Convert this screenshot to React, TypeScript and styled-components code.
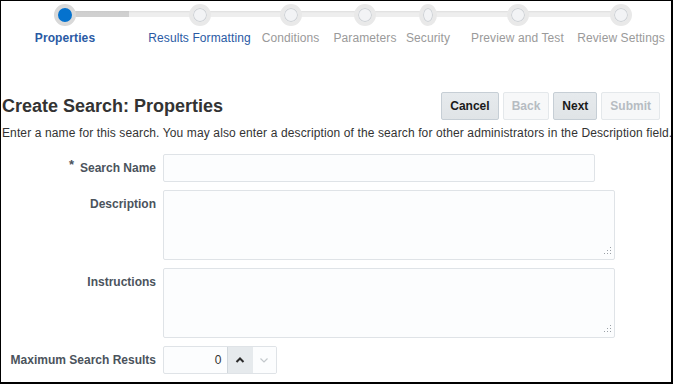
import React from 'react';
import styled, { createGlobalStyle } from 'styled-components';

const GlobalStyle = createGlobalStyle`
  html, body {
    margin: 0;
    padding: 0;
    background: #fff;
  }
  body {
    font-family: 'Liberation Sans', Arial, sans-serif;
    font-size: 12px;
    color: #333;
  }
`;

const steps = [
  { label: 'Properties', width: 128, state: 'current' },
  { label: 'Results Formatting', width: 141, state: 'next' },
  { label: 'Conditions', width: 41, state: 'off' },
  { label: 'Parameters', width: 108, state: 'off' },
  { label: 'Security', width: 18, state: 'off' },
  { label: 'Preview and Test', width: 161, state: 'off' },
  { label: 'Review Settings', width: 46, state: 'off' },
] as const;

type StepState = 'current' | 'next' | 'off';

const fields = [
  { label: 'Search Name', kind: 'input', required: true },
  { label: 'Description', kind: 'area', required: false },
  { label: 'Instructions', kind: 'area', required: false },
] as const;

const App = () => {
  return (
    <>
      <GlobalStyle />
      <Frame>
        <Train>
          {steps.map((step, i) => (
            <Step key={step.label} $w={step.width}>
              <Track $first={i === 0} $last={i === steps.length - 1}>
                <Dot $state={step.state} />
              </Track>
              <StepLabel $state={step.state}>{step.label}</StepLabel>
            </Step>
          ))}
        </Train>

        <Header>
          <Title>Create Search: Properties</Title>
          <Toolbar>
            <Button>Cancel</Button>
            <Button disabled>Back</Button>
            <Button>Next</Button>
            <Button disabled>Submit</Button>
          </Toolbar>
        </Header>

        <Intro>
          Enter a name for this search. You may also enter a description of the search for other
          administrators in the Description field.
        </Intro>

        <Form>
          {fields.map((f) => (
            <React.Fragment key={f.label}>
              <Label>
                {f.required && <Star>*</Star>}
                {f.label}
              </Label>
              {f.kind === 'input' ? (
                <TextInput type='text' />
              ) : (
                <AreaWrap>
                  <TextArea />
                  <Grip width='8' height='9' viewBox='0 0 8 9'>
                    <rect x='6' y='0' width='1' height='1' />
                    <rect x='3' y='3' width='1' height='1' />
                    <rect x='6' y='3' width='1' height='1' />
                    <rect x='0' y='6' width='1' height='1' />
                    <rect x='3' y='6' width='1' height='1' />
                    <rect x='6' y='6' width='1' height='1' />
                  </Grip>
                </AreaWrap>
              )}
            </React.Fragment>
          ))}
          <Label>Maximum Search Results</Label>
          <Spinner>
            <SpinValue>0</SpinValue>
            <SpinButton $active>
              <svg width='10' height='10' viewBox='0 0 10 10'>
                <path d='M1.5 7 L5 3.5 L8.5 7' fill='none' stroke='#2b2b2b' strokeWidth='2' />
              </svg>
            </SpinButton>
            <SpinButton>
              <svg width='10' height='10' viewBox='0 0 10 10'>
                <path d='M1.5 3.5 L5 7 L8.5 3.5' fill='none' stroke='#c3c8cc' strokeWidth='1.2' />
              </svg>
            </SpinButton>
          </Spinner>
        </Form>
      </Frame>
    </>
  );
};

const Frame = styled.div`
  box-sizing: border-box;
  width: 673px;
  height: 384px;
  border-top: 1px solid #000;
  border-left: 1px solid #000;
  border-right: 2px solid #000;
  border-bottom: 2px solid #000;
  overflow: hidden;
  background: #fff;
`;

const Train = styled.div`
  display: flex;
  padding-top: 3px;
`;

const Step = styled.div<{ $w: number }>`
  display: flex;
  flex-direction: column;
  align-items: center;
  flex: 0 0 ${(p) => p.$w}px;
  width: ${(p) => p.$w}px;
`;

const Track = styled.div<{ $first: boolean; $last: boolean }>`
  align-self: stretch;
  height: 22px;
  display: flex;
  justify-content: center;
  background-image: linear-gradient(
    to bottom,
    transparent 7px,
    ${(p) => (p.$first ? '#c9c9c9' : '#dedede')} 7px,
    ${(p) => (p.$first ? '#d0d0d0' : '#eeeeee')} 9px,
    ${(p) => (p.$first ? '#d0d0d0' : '#eeeeee')} 13px,
    transparent 13px
  );
  background-repeat: no-repeat;
  background-size: ${(p) => (p.$first || p.$last ? '50% 100%' : '100% 100%')};
  background-position: ${(p) => (p.$first ? 'right top' : 'left top')};
`;

const Dot = styled.div<{ $state: StepState }>`
  box-sizing: border-box;
  width: 22px;
  height: 22px;
  border-radius: 50%;
  border: 4px solid ${(p) => (p.$state === 'current' ? '#d9d9d9' : '#e9e9e9')};
  background: ${(p) => (p.$state === 'current' ? '#0572ce' : '#f2f3f5')};
  box-shadow: ${(p) => (p.$state === 'current' ? 'none' : 'inset 0 0 0 1px #cdd1d5')};
`;

const StepLabel = styled.div<{ $state: StepState }>`
  margin-top: 5px;
  white-space: nowrap;
  font-size: 12px;
  line-height: 14px;
  letter-spacing: 0.1px;
  font-weight: ${(p) => (p.$state === 'current' ? 'bold' : 'normal')};
  color: ${(p) => (p.$state === 'off' ? '#9a9a9a' : '#2a5aa4')};
`;

const Header = styled.div`
  display: flex;
  align-items: center;
  justify-content: space-between;
  margin-top: 47px;
  padding: 0 11px 0 1px;
`;

const Title = styled.h1`
  margin: 0;
  font-size: 18px;
  font-weight: bold;
  color: #333;
  line-height: 22px;
`;

const Toolbar = styled.div`
  display: flex;
  gap: 4px;
`;

const Button = styled.button`
  box-sizing: border-box;
  height: 28px;
  padding: 0 8px;
  border-radius: 2px;
  font-family: 'Liberation Sans', Arial, sans-serif;
  font-size: 12px;
  font-weight: bold;
  color: #1a1a1a;
  background: linear-gradient(#e6eaed, #e0e4e7);
  border: 1px solid #c6ced5;

  &:disabled {
    color: #b6bcc2;
    background: #f7f8f9;
    border-color: #e4e8eb;
  }
`;

const Intro = styled.p`
  margin: 6px 0 0 1px;
  font-size: 12px;
  line-height: 14px;
  letter-spacing: 0.12px;
  white-space: nowrap;
  color: #333;
`;

const Form = styled.div`
  display: grid;
  grid-template-columns: 155px auto;
  column-gap: 7px;
  row-gap: 8px;
  margin-top: 14px;
  justify-content: start;
`;

const Label = styled.label`
  align-self: start;
  justify-self: end;
  line-height: 28px;
  font-size: 12px;
  font-weight: bold;
  color: #4b535c;
  white-space: nowrap;
`;

const Star = styled.span`
  font-size: 13px;
  position: relative;
  top: -3px;
  margin-right: 6px;
  color: #4b535c;
`;

const fieldBox = `
  box-sizing: border-box;
  border: 1px solid #dfe3e7;
  border-radius: 2px;
  background: #fcfdfe;
  font-family: 'Liberation Sans', Arial, sans-serif;
  font-size: 12px;
  outline: none;
`;

const TextInput = styled.input`
  ${fieldBox}
  width: 432px;
  height: 28px;
  padding: 0 6px;
`;

const AreaWrap = styled.div`
  position: relative;
  width: 452px;
  height: 70px;
`;

const TextArea = styled.textarea`
  ${fieldBox}
  display: block;
  width: 452px;
  height: 70px;
  resize: none;
  padding: 6px;
`;

const Grip = styled.svg`
  position: absolute;
  right: 3px;
  bottom: 4px;
  fill: #9aa0a6;
`;

const Spinner = styled.div`
  display: flex;
  box-sizing: border-box;
  width: 114px;
  height: 28px;
  border: 1px solid #dfe3e7;
  border-radius: 2px;
  background: #fcfdfe;
  overflow: hidden;
`;

const SpinValue = styled.div`
  width: 65px;
  box-sizing: border-box;
  padding-right: 6px;
  text-align: right;
  line-height: 26px;
  font-size: 12px;
  color: #333;
`;

const SpinButton = styled.div<{ $active?: boolean }>`
  width: 24px;
  display: flex;
  align-items: center;
  justify-content: center;
  background: ${(p) => (p.$active ? '#e6eaed' : '#fcfdfe')};
  border-left: 1px solid ${(p) => (p.$active ? '#d2d8dd' : '#e6eaed')};
`;

export default App;
